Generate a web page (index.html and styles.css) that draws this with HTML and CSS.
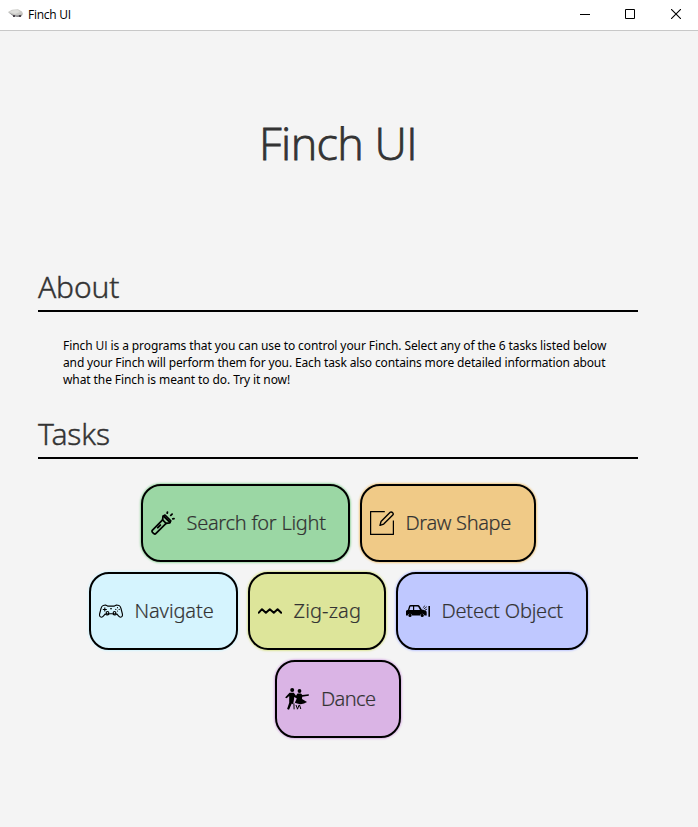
FILE: index.html
```html
<!DOCTYPE html>
<html lang="en">
<head>
<meta charset="utf-8">
<title>Finch UI</title>
<link rel="stylesheet" href="styles.css">
</head>
<body>
<header class="titlebar">
  <svg class="app-icon" width="16" height="16" viewBox="0 0 16 16"><path d="M0 6 4 3.7 10 3.3 14 5.5 15.2 8 13.5 10.2 9 11 5 9.5Z" fill="#c9c9c5"/><path d="M1 6 5 4.2 10 4 12 6 7 8Z" fill="#dededb"/><path d="M0 6 5 8.7 9 9.5 14 8.5 13 10.5 10 11 5 10Z" fill="#85858a"/><path d="M5 9h2v2H5zM11 9h2v2h-2z" fill="#49434a"/></svg>
  <span class="app-name">Finch UI</span>
  <div class="controls">
    <svg width="10" height="10"><path d="M0 5.5H10" stroke="#000"/></svg>
    <svg width="10" height="10"><path d="M.5.5h9v9h-9z" fill="none" stroke="#000"/></svg>
    <svg width="10" height="10"><path d="M0 0 10 10M10 0 0 10" stroke="#000" stroke-width="1.1"/></svg>
  </div>
</header>
<main class="content">
  <h1>Finch UI</h1>
  <h2>About</h2>
  <p class="about">Finch <span class="sans-i">UI</span> is a programs that you can use to control your Finch. Select any of the 6 tasks listed below<br><span class="tight">and your Finch will perform them for you. Each task also contains more detailed information about</span><br>what the Finch is meant to do. Try it now!</p>
  <h2>Tasks</h2>
  <div class="tasks">
    <div class="row">
      <button class="task search"><svg viewBox="0 0 24 24"><g fill="none" stroke="#000" stroke-width="1.7" stroke-linejoin="round" stroke-linecap="round"><path d="M11.6 8.8 1.5 19.1Q.5 20.3 1.5 21.4L2.8 22.6Q4 23.5 5 22.4L15.1 12.3"/><path d="M11.6 8.8 12 5.2 14 4 19.8 9.8 18.7 11.8 15.1 12.3Z"/><path d="m12.6 5 6.4 6.4M6.8 16.6 9.3 14.1" stroke-width="2"/><path d="m16.2 2.2.2-1M19.8 4.3l1.3-1.2M21.8 7.8l1.2-.2" stroke-width="1.8"/></g></svg><span>Search for Light</span></button>
      <button class="task draw"><svg viewBox="0 0 24 24"><g fill="none" stroke="#000" stroke-width="1.25" stroke-linejoin="round"><path d="M14.8.6H.6V23.4H23.4V9.5"/><path d="M10 14.4 11 10.6 20.2 1.3Q21.2.4 22.6 1.6 23.8 3 22.8 4L13.7 13.1Z" stroke-width="1.4"/></g></svg><span>Draw Shape</span></button>
    </div>
    <div class="row">
      <button class="task navigate"><svg viewBox="0 0 24 24"><g fill="none" stroke="#000" stroke-width="1.1" stroke-linejoin="round"><path d="M4.2 6.5 6.5 6 8.6 7.1H15.4L17.5 6 20 6.5Q21.4 7 22 9.5L23.4 15Q23.8 18 21.6 18.2 20.4 18.2 19 16.3L17.8 14.8Q15.8 17.2 13.8 14.8H10.2Q8.2 17.2 6.2 14.8L5 16.3Q3.6 18.2 2.4 18.2.2 18 .6 15L2 9.5Q2.6 7 4.2 6.5Z"/><circle cx="8.5" cy="13.8" r="1.3"/><circle cx="15.5" cy="13.8" r="1.3"/><path d="M5.8 8.5v4M3.8 10.5h4M11 9.8h2"/></g><g><circle cx="18.5" cy="8.7" r=".6"/><circle cx="18.5" cy="12" r=".6"/><circle cx="16.8" cy="10.4" r=".6"/><circle cx="20.2" cy="10.4" r=".6"/></g></svg><span>Navigate</span></button>
      <button class="task zigzag"><svg viewBox="0 0 24 24"><path d="M.8 13.7 4 10.2 7.9 13.8 11.8 10.2 15.8 13.8 19.6 10.2 23.2 13.7" fill="none" stroke="#000" stroke-width="2" stroke-linejoin="round" stroke-linecap="round"/></svg><span>Zig-zag</span></button>
      <button class="task detect"><svg viewBox="0 0 24 24"><path fill-rule="evenodd" d="M0 11.8 2 10.8 3.1 7.1Q3.5 6.1 4.7 6.1H12Q13 6.1 13.8 7.2L15.8 10.5 19.5 11.6Q20.7 12 20.7 13.5V16.5H18.5A2.3 2.3 0 0 0 14 16.5H6.2A2.3 2.3 0 0 0 1.7 16.5H0ZM4.4 7.4 3.3 11H7V7.4ZM8.2 7.4V11H14L12.2 7.8Q12 7.4 11.4 7.4Z"/><circle cx="4" cy="16.4" r="1.6"/><circle cx="16.2" cy="16.4" r="1.6"/><path d="M22.4 7H24V17.8H22.4Z"/><path d="m16.8 8.8 2.3-2.2M17.8 10l3-2.3M19 11l2-.8" fill="none" stroke="#000" stroke-width=".8"/></svg><span>Detect Object</span></button>
    </div>
    <div class="row">
      <button class="task dance"><svg viewBox="0 0 24 24"><circle cx="7.2" cy="3" r="2"/><circle cx="14.5" cy="4" r="1.9"/><path d="M4.5 5.7H8.8L11 8.8 12.5 6.4H16L17.3 7.9 23.8 7.3V8.7L17.2 9.7 17 12 22 15Q18 18 13 16.8L9.8 15.8 11.8 11.5 9.3 10 8.7 14.2 8 17.2 6.8 16.5 4 22.7 2.1 22 4.2 15.7V8.9L1.6 11.3.1 10.4Z"/><path d="m8.9 16.3.2 6M11 18l1.5 4M14.2 17.8l-1.8 4.5M14.5 18l1.3 4" fill="none" stroke="#000"/></svg><span>Dance</span></button>
    </div>
  </div>
</main>
</body>
</html>
```
FILE: styles.css
```css
* { box-sizing: border-box; }
body {
  margin: 0;
  height: 827px;
  overflow: hidden;
  background: #f4f4f4;
  color: #000;
  font-family: "Noto Sans", "Open Sans", sans-serif;
}
.titlebar {
  height: 31px;
  background: #fff;
  border-bottom: 1px solid #c8c8c8;
  display: flex;
  align-items: center;
  padding: 0 17px 2px 8px;
}
.app-name {
  margin-left: 4px;
  font-family: "Open Sans", sans-serif;
  font-size: 12px;
  letter-spacing: -0.25px;
}
.controls {
  margin-left: auto;
  display: flex;
  gap: 36px;
}
.controls svg { display: block; }
.controls svg:first-child { margin-right: -1px; }
.content {
  width: 600px;
  margin-left: 38px;
}
h1, h2 {
  margin: 0;
  font-weight: 300;
  color: #333;
}
h1 {
  height: 229px;
  padding-top: 81px;
  font-family: "Open Sans", sans-serif;
  font-size: 45px;
  line-height: 62px;
  text-align: center;
  letter-spacing: -0.6px;
  -webkit-text-stroke: 0.8px #333;
}
h2 {
  height: 52px;
  border-bottom: 2px solid #000;
  font-size: 30px;
  line-height: 54px;
  letter-spacing: -0.15px;
  -webkit-text-stroke: 0.4px #333;
}
.about {
  margin: 25px 0 19px 25px;
  font-size: 12px;
  line-height: 17px;
  white-space: nowrap;
  letter-spacing: -0.09px;
}
.tight { letter-spacing: -0.135px; }
.sans-i { font-family: "Open Sans", sans-serif; }
.tasks {
  display: flex;
  flex-direction: column;
  gap: 10px;
  margin-top: 25px;
}
.row {
  display: flex;
  justify-content: center;
  gap: 10px;
}
.task {
  height: 78px;
  padding: 0 0 0 8px;
  display: flex;
  align-items: center;
  gap: 12px;
  border: 2px solid #000;
  border-radius: 20px;
  font: 300 20px "Noto Sans", "Open Sans", sans-serif;
  letter-spacing: -0.27px;
  color: #333;
  white-space: nowrap;
}
.task svg {
  width: 24px;
  height: 24px;
  flex: none;
}
.task span {
  margin-top: -1px;
  -webkit-text-stroke: 0.2px #333;
}
.search { width: 209px; background: #9bd7a4; box-shadow: 0 0 2px 1px #9bd7a4; }
.draw { width: 176px; background: #f0ca87; box-shadow: 0 0 2px 1px #f0ca87; letter-spacing: -0.35px; }
.navigate { width: 149px; background: #d5f4fe; box-shadow: 0 0 2px 1px #d5f4fe; letter-spacing: -0.1px; }
.zigzag { width: 138px; background: #dde59a; box-shadow: 0 0 2px 1px #dde59a; letter-spacing: 0.15px; }
.detect { width: 192px; background: #bfc8ff; box-shadow: 0 0 2px 1px #bfc8ff; letter-spacing: -0.2px; }
.dance { width: 126px; background: #dab4e5; box-shadow: 0 0 2px 1px #dab4e5; letter-spacing: -0.6px; }
```
